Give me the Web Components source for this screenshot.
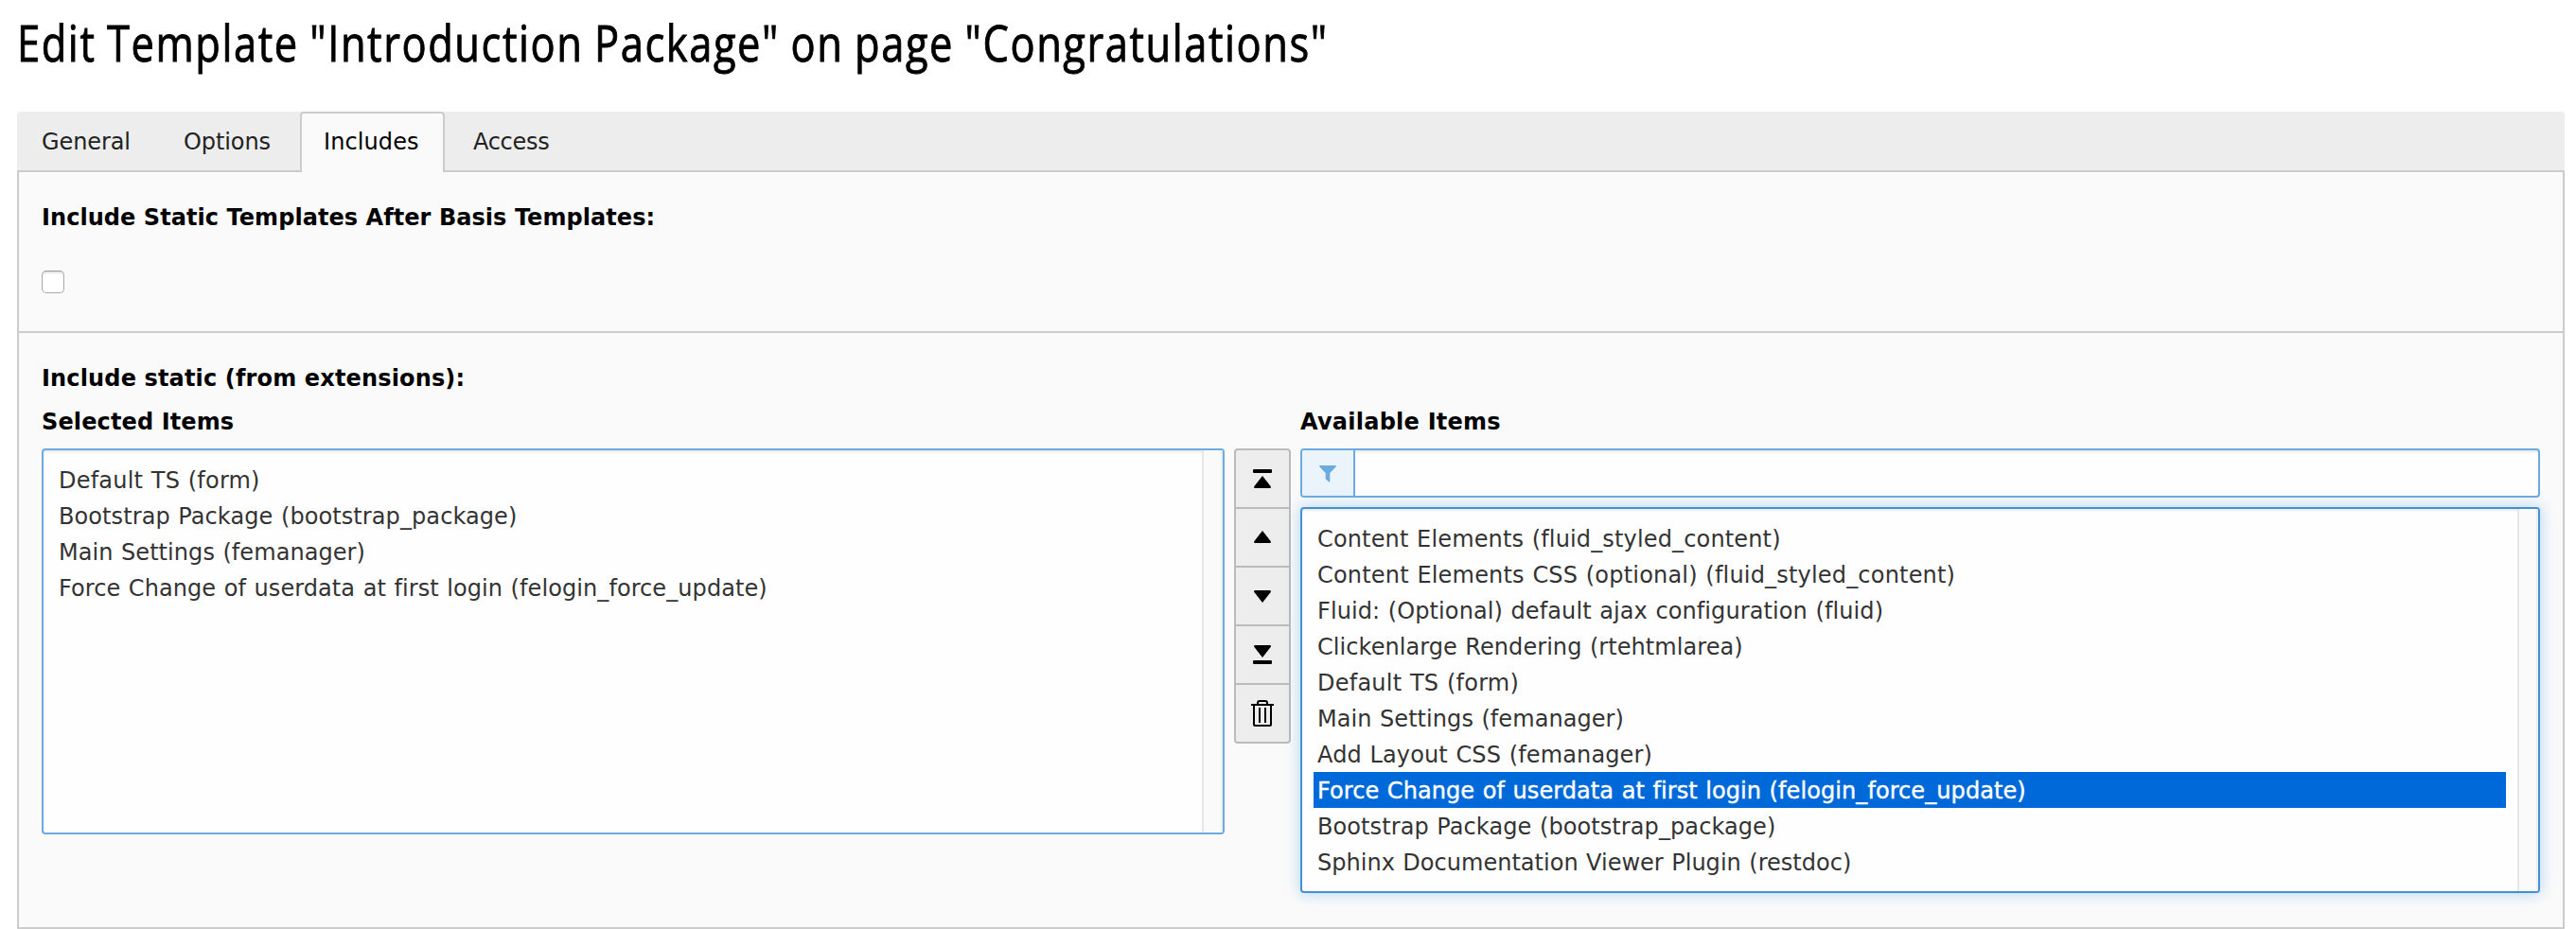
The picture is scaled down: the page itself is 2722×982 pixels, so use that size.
<!DOCTYPE html>
<html lang="en">
<head>
<meta charset="utf-8">
<title>Edit Template</title>
<style>
html,body{margin:0;background:#fff}
body{width:2722px;height:982px;overflow:hidden;font:24px/40px "DejaVu Sans",Verdana,sans-serif;color:#333}
</style>
</head>
<body>
<edit-form>
  <page-title slot="title">Edit Template "Introduction Package" on page "Congratulations"</page-title>
  <tab-bar slot="tabs">
    <tab-item style="width:146px">General</tab-item>
    <tab-item style="width:145px">Options</tab-item>
    <tab-item active style="width:153px;--ls:.1px">Includes</tab-item>
    <tab-item style="width:132px;--ls:-.3px">Access</tab-item>
  </tab-bar>
  <form-section style="height:170px">
    <field-label style="--ls:.06px">Include Static Templates After Basis Templates:</field-label>
    <check-box></check-box>
  </form-section>
  <form-section last style="height:628px">
    <field-label style="--ls:.15px">Include static (from extensions):</field-label>
    <item-picker>
      <field-label slot="left-label" style="--ls:.12px">Selected Items</field-label>
      <list-box slot="left">
        <list-option style="--ls:.21px">Default TS (form)</list-option>
        <list-option style="--ls:.09px">Bootstrap Package (bootstrap_package)</list-option>
        <list-option style="--ls:.06px">Main Settings (femanager)</list-option>
        <list-option style="--ls:.08px">Force Change of userdata at first login (felogin_force_update)</list-option>
      </list-box>
      <move-buttons slot="buttons"></move-buttons>
      <field-label slot="right-label" style="--ls:.24px">Available Items</field-label>
      <filter-input slot="right"></filter-input>
      <list-box slot="right" focused>
        <list-option style="--ls:.15px">Content Elements (fluid_styled_content)</list-option>
        <list-option style="--ls:.19px">Content Elements CSS (optional) (fluid_styled_content)</list-option>
        <list-option style="--ls:.1px">Fluid: (Optional) default ajax configuration (fluid)</list-option>
        <list-option style="--ls:.06px">Clickenlarge Rendering (rtehtmlarea)</list-option>
        <list-option style="--ls:.23px">Default TS (form)</list-option>
        <list-option style="--ls:.06px">Main Settings (femanager)</list-option>
        <list-option style="--ls:.14px">Add Layout CSS (femanager)</list-option>
        <list-option selected style="--ls:.08px">Force Change of userdata at first login (felogin_force_update)</list-option>
        <list-option style="--ls:.09px">Bootstrap Package (bootstrap_package)</list-option>
        <list-option style="--ls:.02px">Sphinx Documentation Viewer Plugin (restdoc)</list-option>
      </list-box>
    </item-picker>
  </form-section>
</edit-form>
<script>
const define = (name, html) => customElements.define(name, class extends HTMLElement {
  constructor() {
    super();
    this.attachShadow({ mode: 'open' }).innerHTML = html;
  }
});

define('edit-form', `<style>
  :host{display:block;padding:0 12px 0 18px}
  header{height:118px}
  main{border:2px solid #ccc;border-top:0;background:#fafafa}
</style><header><slot name="title"></slot></header><slot name="tabs"></slot><main><slot></slot></main>`);

define('page-title', `<style>
  :host{display:block;padding-top:10px}
  h1{margin:0;width:max-content;font:400 53px/70px "Open Sans","Noto Sans",sans-serif;color:#000;white-space:nowrap;letter-spacing:1.9px;word-spacing:-1.5px;-webkit-text-stroke:.9px #000;transform-origin:0 0;transform:scaleX(.82)}
</style><h1><slot></slot></h1>`);

define('tab-bar', `<style>
  :host{display:flex;gap:4px;height:64px;box-sizing:border-box;background:#ededed;border-radius:4px 4px 0 0;box-shadow:inset 0 -2px #ccc}
</style><slot></slot>`);

define('tab-item', `<style>
  :host{display:block;box-sizing:border-box;height:64px;padding:10px 0 0 24px;border:2px solid transparent;border-bottom:0;color:#222;white-space:nowrap;letter-spacing:var(--ls,-.1px)}
  :host([active]){padding-left:23px;background:#fafafa;border-color:#ccc;border-radius:4px 4px 0 0;color:#000}
</style><slot></slot>`);

define('form-section', `<style>
  :host{display:block;box-sizing:border-box;padding:28px 24px 0;border-bottom:2px solid #ccc}
  :host([last]){border-bottom:0}
</style><slot></slot>`);

define('field-label', `<style>
  :host{display:block;height:38px;font-weight:700;color:#000;white-space:nowrap;letter-spacing:var(--ls,0)}
</style><slot></slot>`);

define('check-box', `<style>
  :host{display:block;margin-top:38px}
  i{display:block;box-sizing:border-box;width:24px;height:24px;border:1px solid #aaa;border-top-color:#999;border-radius:5px;background:#fff;box-shadow:inset 0 2px 2px #e4e4e4}
</style><i></i>`);

define('item-picker', `<style>
  :host{display:grid;grid-template-columns:1250px 60px 1310px;column-gap:10px;grid-template-rows:48px auto;align-items:start;padding-top:8px}
  .r{grid-column:3}
  .stack{display:flex;flex-direction:column;gap:10px}
</style><slot name="left-label"></slot><div class="r"><slot name="right-label"></slot></div>
<slot name="left"></slot><slot name="buttons"></slot><div class="stack"><slot name="right"></slot></div>`);

define('list-box', `<style>
  :host{display:flex;box-sizing:border-box;height:408px;border:2px solid #6daae0;border-radius:4px;background:#fefefe;box-shadow:inset 0 2px 2px rgba(0,0,0,.075);overflow:hidden}
  :host([focused]){border-color:#4390d8;box-shadow:inset 0 2px 2px rgba(0,0,0,.075),0 0 16px rgba(102,175,233,.5)}
  .items{flex:1;padding:12px 12px 0}
  .track{box-sizing:border-box;width:22px;background:#fafafa;border:solid #e7e7e7;border-width:0 2px;border-right-color:#ededed}
</style><div class="items"><slot></slot></div><div class="track"></div>`);

define('list-option', `<style>
  :host{display:block;height:38px;padding-left:4px;white-space:nowrap;letter-spacing:var(--ls,0);word-spacing:.8px}
  :host([selected]){background:#0069d9;color:#fff;-webkit-text-stroke:.4px #fff}
</style><slot></slot>`);

define('filter-input', `<style>
  :host{display:flex;box-sizing:border-box;height:52px;border:2px solid #6daae0;border-radius:4px;background:#fefefe;box-shadow:inset 0 2px 2px rgba(0,0,0,.075);overflow:hidden}
  span{box-sizing:border-box;width:56px;border-right:2px solid #6daae0;background:#ebf3fb;padding:16px 0 0 18px}
  svg{display:block}
</style><span><svg width="18" height="18"><path fill="#6daae0" d="M.6 0H17.4Q18.300 .6 17.600 1.500L11.300 8V17Q11.200 17.900 10.300 17.500L7 14.600Q6.700 14.200 6.700 13.700V8L.4 1.500Q-.3 .6 .6 0Z"/></svg></span>`);

define('move-buttons', `<style>
  :host{display:block;box-sizing:border-box;width:60px;height:312px;border:2px solid #bbb;border-radius:4px;background:#ededed;overflow:hidden}
  div{box-sizing:border-box;width:56px;height:62px;border-bottom:2px solid #bbb;padding:14px 0 0 12px}
  div:last-child{border:0}
  svg{display:block}
</style>
<div><svg width="32" height="32"><rect x="6" y="6" width="20" height="4" rx="1"/><path d="M16 13L25 24.500Q25 26 24 26H8Q7 26 7 24.500Z"/></svg></div>
<div><svg width="32" height="32"><path d="M16 9L25 20.500Q25 22 24 22H8Q7 22 7 20.500Z"/></svg></div>
<div><svg width="32" height="32"><path d="M16 23L25 11.500Q25 10 24 10H8Q7 10 7 11.500Z"/></svg></div>
<div><svg width="32" height="32"><path d="M16 19L25 7.500Q25 6 24 6H8Q7 6 7 7.500Z"/><rect x="6" y="22" width="20" height="4" rx="1"/></svg></div>
<div><svg width="32" height="32" fill="none" stroke="#000" stroke-width="2"><path d="M4 7H28M11 7V5Q11 3 13 3H19Q21 3 21 5V7M7 7V28Q7 29 8 29H24Q25 29 25 28V7M13 10V26M19 10V26"/></svg></div>`);
</script>
</body>
</html>
